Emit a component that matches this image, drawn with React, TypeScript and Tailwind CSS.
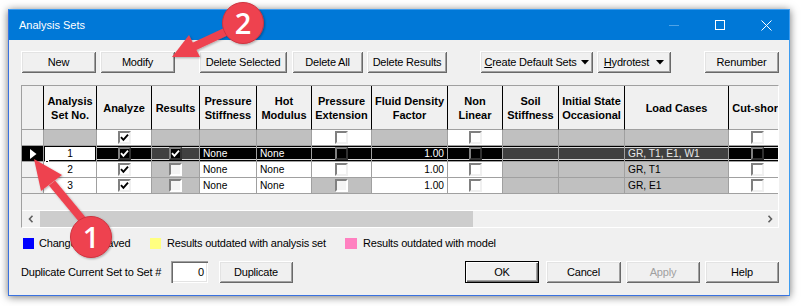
import React from "react";

const ui = { fontFamily: '"Liberation Sans", Arial, sans-serif' };

const COLS =
  "grid grid-cols-[22px_53px_55px_48px_57px_55px_60px_76px_55px_56px_66px_104px_57px]";

const W = "bg-white text-black";
const G = "bg-[#c0c0c0] text-black";
const K = "bg-black text-white";
const D = "bg-[#404040] text-[#e8e8e8]";
const H = "bg-[#f0f0f0]";
const SEL =
  "shadow-[inset_0_1px_0_#000,inset_0_2px_0_#d8d8d8,inset_0_-1px_0_#000,inset_0_-2px_0_#d8d8d8]";

type Tone = "light" | "grey" | "dark";

function Box({ on, tone = "light" }: { on?: boolean; tone?: Tone }) {
  const frame =
    tone === "dark"
      ? "bg-black border-t-[#808080] border-l-[#808080] border-b-[#303030] border-r-[#303030]"
      : tone === "grey"
        ? "bg-[#f4f4f4] border-t-[#808080] border-l-[#808080] border-b-white border-r-white"
        : "bg-white border-t-[#808080] border-l-[#808080] border-b-[#f0f0f0] border-r-[#f0f0f0]";
  return (
    <div className={`w-[13px] h-[13px] border-2 flex items-center justify-center ${frame}`}>
      {on && (
        <svg width="9" height="9" viewBox="0 0 9 9">
          <path
            d="M1 4.2 L3.4 6.8 L8 1.6"
            fill="none"
            stroke={tone === "dark" ? "#fff" : "#000"}
            strokeWidth="1.9"
          />
        </svg>
      )}
    </div>
  );
}

function Cell({
  bg,
  al = "c",
  sel,
  className = "",
  children,
}: {
  bg: string;
  al?: "l" | "c" | "r";
  sel?: boolean;
  className?: string;
  children?: React.ReactNode;
}) {
  const a = al === "l" ? "justify-start pl-[3px]" : al === "r" ? "justify-end pr-[3px]" : "justify-center";
  return (
    <div
      className={`relative h-[16px] flex items-center overflow-hidden whitespace-nowrap border-r border-b border-[#a0a0a0] text-[10.2px] ${a} ${bg} ${sel ? SEL : ""} ${className}`}
    >
      {children}
    </div>
  );
}

function Head({ children }: { children?: React.ReactNode }) {
  return (
    <div className="h-[44px] flex items-center justify-center text-center whitespace-nowrap font-bold text-[11px] leading-[14px] bg-[#f0f0f0] border-r border-b border-r-black border-b-[#a0a0a0]">
      <div>{children}</div>
    </div>
  );
}

function Btn({
  className = "",
  disabled,
  def,
  children,
}: {
  className?: string;
  disabled?: boolean;
  def?: boolean;
  children: React.ReactNode;
}) {
  return (
    <div
      className={`h-[22px] flex items-center justify-center bg-[#f0f0f0] text-[11px] tracking-[-0.2px] ${
        def
          ? "border border-black shadow-[inset_1px_1px_0_#fff,inset_-1px_-1px_0_#696969,inset_-2px_-2px_0_#a0a0a0]"
          : "shadow-[inset_1px_1px_0_#fff,inset_-1px_-1px_0_#696969,inset_2px_2px_0_#e3e3e3,inset_-2px_-2px_0_#a0a0a0]"
      } ${disabled ? "text-[#a0a0a0]" : "text-black"} ${className}`}
    >
      {children}
    </div>
  );
}

function DropTri() {
  return (
    <svg width="8" height="5" viewBox="0 0 8 5" className="ml-[4px]">
      <polygon points="0,0 8,0 4,4.5" fill="#000" />
    </svg>
  );
}

function Annotations() {
  return (
    <svg
      className="absolute left-0 top-0 pointer-events-none"
      width="801"
      height="306"
      viewBox="0 0 801 306"
    >
      <defs>
        <filter id="sh" x="-20%" y="-20%" width="140%" height="140%">
          <feDropShadow dx="1" dy="1" stdDeviation="1.2" floodColor="#000" floodOpacity="0.3" />
        </filter>
      </defs>
      <g filter="url(#sh)" fill="#ee4350">
        <line x1="236" y1="27" x2="193" y2="47" stroke="#ee4350" strokeWidth="8" />
        <polygon points="172,57 189,35 200,57" />
        <circle cx="243" cy="23" r="20.5" stroke="#cf323e" strokeWidth="1" />
        <line x1="52" y1="183" x2="86" y2="224" stroke="#ee4350" strokeWidth="8" />
        <polygon points="34,159 62,175 41,191" />
        <circle cx="91" cy="237" r="20.5" stroke="#cf323e" strokeWidth="1" />
      </g>
      <text
        x="243"
        y="33.5"
        textAnchor="middle"
        fill="#fff"
        fontSize="29"
        fontWeight="600"
        fontFamily='"Open Sans", Arial, sans-serif'
      >
        2
      </text>
      <text
        x="91"
        y="247.5"
        textAnchor="middle"
        fill="#fff"
        fontSize="29"
        fontWeight="600"
        fontFamily='"Open Sans", Arial, sans-serif'
      >
        1
      </text>
    </svg>
  );
}

export default function App() {
  return (
    <div className="relative w-[801px] h-[306px] bg-white overflow-hidden pl-[8px] pt-[9px]" style={ui}>
      <div className="w-[782px] h-[287px] flex flex-col bg-[#f0f0f0] border border-[#3a72e0] border-t-[#3d9cf0] border-r-[#3d9cf0] shadow-[0_1px_8px_rgba(0,0,0,0.55)]">
        {/* title bar */}
        <div className="h-[30px] shrink-0 bg-[#0078d7] flex items-center text-white">
          <span className="pl-[10px] text-[11px]">Analysis Sets</span>
          <div className="ml-auto flex h-full">
            <div className="w-[46px] flex items-center justify-center">
              <div className="w-[10px] h-[1px] bg-[#4fa3e6]" />
            </div>
            <div className="w-[46px] flex items-center justify-center">
              <div className="w-[10px] h-[10px] border border-white" />
            </div>
            <div className="w-[46px] flex items-center justify-center">
              <svg width="11" height="11" viewBox="0 0 11 11">
                <path d="M0.5 0.5 L10.5 10.5 M10.5 0.5 L0.5 10.5" stroke="#fff" strokeWidth="1" />
              </svg>
            </div>
          </div>
        </div>

        <div className="flex-1 flex flex-col pl-[12px] pr-[10px]">
          {/* toolbar */}
          <div className="mt-[11px] flex h-[22px]">
            <Btn className="w-[75px]">New</Btn>
            <Btn className="ml-[4px] w-[75px]">Modify</Btn>
            <Btn className="ml-[24px] w-[88px]">Delete Selected</Btn>
            <Btn className="ml-[5px] w-[71px]">Delete All</Btn>
            <Btn className="ml-[4px] w-[80px]">Delete Results</Btn>
            <Btn className="ml-[33px] w-[113px]">
              <span className="underline underline-offset-[1px]">C</span>reate Default Sets
              <DropTri />
            </Btn>
            <Btn className="ml-[4px] w-[74px]">
              <span className="underline underline-offset-[1px]">H</span>ydrotest
              <span className="ml-[3px]" />
              <DropTri />
            </Btn>
            <Btn className="ml-auto w-[75px]">Renumber</Btn>
          </div>

          {/* grid */}
          <div className="mt-[12px] h-[143px] flex flex-col bg-[#f0f0f0] border border-t-[#a0a0a0] border-l-[#a0a0a0] border-b-white border-r-white">
            <div className="w-[756px] overflow-hidden">
              <div className={COLS}>
                <Head />
                <Head>
                  Analysis
                  <br />
                  Set No.
                </Head>
                <Head>Analyze</Head>
                <Head>Results</Head>
                <Head>
                  Pressure
                  <br />
                  Stiffness
                </Head>
                <Head>
                  Hot
                  <br />
                  Modulus
                </Head>
                <Head>
                  Pressure
                  <br />
                  Extension
                </Head>
                <Head>
                  Fluid Density
                  <br />
                  Factor
                </Head>
                <Head>
                  Non
                  <br />
                  Linear
                </Head>
                <Head>
                  Soil
                  <br />
                  Stiffness
                </Head>
                <Head>
                  Initial State
                  <br />
                  Occasional
                </Head>
                <Head>Load Cases</Head>
                <Head>Cut-short</Head>
              </div>

              {/* defaults row */}
              <div className={COLS}>
                <Cell bg={H} />
                <Cell bg={G} />
                <Cell bg={W}>
                  <Box on />
                </Cell>
                <Cell bg={G} />
                <Cell bg={G} />
                <Cell bg={G} />
                <Cell bg={W}>
                  <Box />
                </Cell>
                <Cell bg={G} />
                <Cell bg={W}>
                  <Box />
                </Cell>
                <Cell bg={G} />
                <Cell bg={G} />
                <Cell bg={G} />
                <Cell bg={W}>
                  <Box />
                </Cell>
              </div>

              {/* selected row */}
              <div className={COLS}>
                <Cell bg={K}>
                  <svg width="7" height="10" viewBox="0 0 7 10" className="ml-[2px]">
                    <polygon points="0,0 6.5,5 0,10" fill="#fff" />
                  </svg>
                </Cell>
                <Cell bg={W} className="overflow-visible shadow-[inset_0_0_0_1px_#000]">
                  1
                  <div className="absolute left-[1px] bottom-[-3px] w-[4px] h-[4px] bg-black border border-white" />
                </Cell>
                <Cell bg={K} sel>
                  <Box on tone="dark" />
                </Cell>
                <Cell bg={D} sel>
                  <Box on tone="dark" />
                </Cell>
                <Cell bg={K} al="l" sel>
                  None
                </Cell>
                <Cell bg={K} al="l" sel>
                  None
                </Cell>
                <Cell bg={K} sel>
                  <Box tone="dark" />
                </Cell>
                <Cell bg={K} al="r" sel>
                  1.00
                </Cell>
                <Cell bg={K} sel>
                  <Box tone="dark" />
                </Cell>
                <Cell bg={D} sel />
                <Cell bg={D} sel />
                <Cell bg={D} al="l" sel>
                  GR, T1, E1, W1
                </Cell>
                <Cell bg={K} sel>
                  <Box tone="dark" />
                </Cell>
              </div>

              {/* row 2 */}
              <div className={COLS}>
                <Cell bg={H} />
                <Cell bg={W}>2</Cell>
                <Cell bg={W}>
                  <Box on />
                </Cell>
                <Cell bg={G}>
                  <Box tone="grey" />
                </Cell>
                <Cell bg={W} al="l">
                  None
                </Cell>
                <Cell bg={W} al="l">
                  None
                </Cell>
                <Cell bg={W}>
                  <Box />
                </Cell>
                <Cell bg={W} al="r">
                  1.00
                </Cell>
                <Cell bg={W}>
                  <Box />
                </Cell>
                <Cell bg={G} />
                <Cell bg={G} />
                <Cell bg={G} al="l">
                  GR, T1
                </Cell>
                <Cell bg={W}>
                  <Box />
                </Cell>
              </div>

              {/* row 3 */}
              <div className={COLS}>
                <Cell bg={H} />
                <Cell bg={W}>3</Cell>
                <Cell bg={W}>
                  <Box on />
                </Cell>
                <Cell bg={G}>
                  <Box tone="grey" />
                </Cell>
                <Cell bg={W} al="l">
                  None
                </Cell>
                <Cell bg={W} al="l">
                  None
                </Cell>
                <Cell bg={G}>
                  <Box tone="grey" />
                </Cell>
                <Cell bg={W} al="r">
                  1.00
                </Cell>
                <Cell bg={W}>
                  <Box />
                </Cell>
                <Cell bg={G} />
                <Cell bg={G} />
                <Cell bg={G} al="l">
                  GR, E1
                </Cell>
                <Cell bg={W}>
                  <Box />
                </Cell>
              </div>
            </div>

            <div className="flex-1" />

            {/* horizontal scrollbar */}
            <div className="h-[17px] shrink-0 flex bg-[#f0f0f0] border-t border-t-white">
              <div className="w-[17px] flex items-center justify-center">
                <svg width="6" height="8" viewBox="0 0 6 8">
                  <path d="M4.5 0.8 L1.5 4 L4.5 7.2" fill="none" stroke="#606060" strokeWidth="1.6" />
                </svg>
              </div>
              <div className="w-[433px] ml-[1px] bg-[#cdcdcd]" />
              <div className="flex-1" />
              <div className="w-[17px] flex items-center justify-center">
                <svg width="6" height="8" viewBox="0 0 6 8">
                  <path d="M1.5 0.8 L4.5 4 L1.5 7.2" fill="none" stroke="#606060" strokeWidth="1.6" />
                </svg>
              </div>
            </div>
          </div>

          {/* legend */}
          <div className="mt-[9px] h-[12px] flex items-center text-[11px] tracking-[-0.2px] text-black">
            <div className="w-[129px] flex items-center">
              <div className="ml-[2px] w-[11px] h-[11px] bg-[#0000ff]" />
              <span className="ml-[5px]">Changes not saved</span>
            </div>
            <div className="w-[195px] flex items-center">
              <div className="w-[11px] h-[11px] bg-[#ffff80]" />
              <span className="ml-[6px]">Results outdated with analysis set</span>
            </div>
            <div className="flex items-center">
              <div className="w-[12px] h-[11px] bg-[#ff80c0]" />
              <span className="ml-[6px]">Results outdated with model</span>
            </div>
          </div>

          {/* duplicate + dialog buttons */}
          <div className="mt-[12px] h-[22px] flex items-center text-[11px] tracking-[-0.2px]">
            <span className="w-[150px]">Duplicate Current Set to Set #</span>
            <div className="w-[37px] h-[22px] bg-white flex items-center justify-end pr-[4px] shadow-[inset_1px_1px_0_#a0a0a0,inset_2px_2px_0_#696969,inset_-1px_-1px_0_#fff,inset_-2px_-2px_0_#e3e3e3]">
              0
            </div>
            <Btn className="ml-[11px] w-[74px]">Duplicate</Btn>
            <Btn def className="ml-auto w-[74px]">
              OK
            </Btn>
            <Btn className="ml-[7px] w-[75px]">Cancel</Btn>
            <Btn disabled className="ml-[5px] w-[74px]">
              Apply
            </Btn>
            <Btn className="ml-[5px] w-[74px]">Help</Btn>
          </div>
        </div>
      </div>
      <Annotations />
    </div>
  );
}
